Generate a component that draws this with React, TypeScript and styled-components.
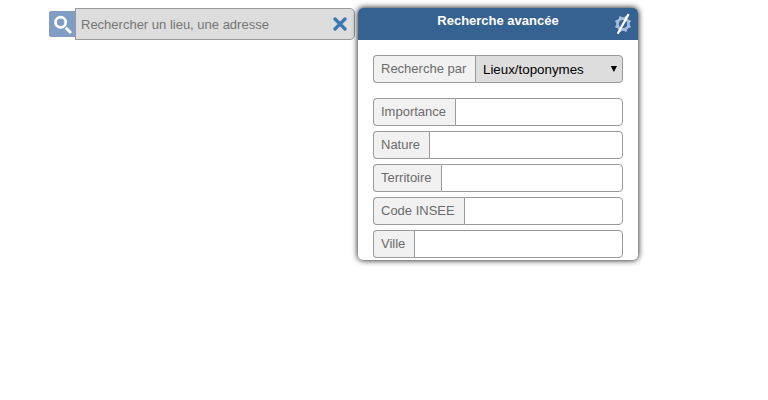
import React from "react";
import styled, { createGlobalStyle } from "styled-components";

const GlobalStyle = createGlobalStyle`
  * { box-sizing: border-box; }
  body {
    margin: 0;
    background: #fff;
    font-family: "Liberation Sans", Arial, sans-serif;
    font-size: 13px;
  }
`;

const Page = styled.main`
  display: flex;
  align-items: flex-start;
  min-height: 100vh;
  padding: 8px 0 0 49px;
`;

const SearchButton = styled.button`
  width: 26px;
  height: 26px;
  margin-top: 3px;
  padding: 0;
  border: 0;
  border-radius: 2px 0 0 2px;
  background: #7f9dc5;
  svg { display: block; }
`;

const SearchField = styled.div`
  display: flex;
  align-items: center;
  width: 280px;
  height: 32px;
  padding: 0 7px 0 5px;
  border: 1px solid #999;
  border-radius: 0 5px 5px 0;
  background: #ddd;
`;

const SearchInput = styled.input`
  flex: 1;
  min-width: 0;
  padding: 0;
  border: 0;
  outline: 0;
  background: transparent;
  font: 13px "Liberation Sans", Arial, sans-serif;
  &::placeholder { color: #757575; opacity: 1; }
`;

const Panel = styled.section`
  width: 280px;
  height: 252px;
  margin-left: 3px;
  overflow: hidden;
  border-radius: 5px;
  background: #fff;
  box-shadow: 0 0 6px #000;
`;

const PanelHeader = styled.header`
  display: grid;
  grid-template-columns: 30px 1fr 30px;
  height: 32px;
  background: #366291;
`;

const PanelTitle = styled.h1`
  grid-column: 2;
  margin: 0;
  padding-top: 5px;
  color: #fff;
  font-size: 13px;
  line-height: 15px;
  text-align: center;
`;

const Form = styled.form`
  padding: 15px 15px 0;
`;

const Row = styled.div<{ $gap?: number }>`
  display: flex;
  height: 28px;
  margin-bottom: ${({ $gap = 5 }) => $gap}px;
`;

const Label = styled.label<{ $width: number }>`
  flex: 0 0 ${({ $width }) => $width}px;
  padding-left: 7px;
  border: 1px solid #999;
  border-right: 0;
  border-radius: 4px 0 0 4px;
  background: #f1f1f1;
  color: #6b6b6b;
  line-height: 26px;
  white-space: nowrap;
`;

const TextInput = styled.input`
  flex: 1;
  min-width: 0;
  border: 1px solid #999;
  border-radius: 0 4px 4px 0;
  background: #fff;
  outline: 0;
`;

const SelectBox = styled.button`
  display: flex;
  flex: 1;
  align-items: center;
  justify-content: space-between;
  padding: 1px 4px 0 7px;
  border: 1px solid #999;
  border-radius: 0 4px 4px 0;
  background: #ddd;
  color: #000;
  font: 13.33px "Liberation Sans", Arial, sans-serif;
`;

const filters = [
  { name: "Importance", width: 82 },
  { name: "Nature", width: 56 },
  { name: "Territoire", width: 68 },
  { name: "Code INSEE", width: 91 },
  { name: "Ville", width: 41 },
];

const teeth = [22.5, 67.5, 112.5, 157.5, 202.5, 247.5, 292.5, 337.5];

const SearchIcon = () => (
  <svg width="26" height="26" viewBox="0 0 26 26" fill="none" stroke="#fff">
    <circle cx="11.6" cy="11.3" r="5.1" strokeWidth="2.7" />
    <path d="M16.7 16.7 L22 22" strokeWidth="2.9" />
  </svg>
);

const ClearIcon = () => (
  <svg width="14" height="14" viewBox="0 0 14 14">
    <path d="M2 2 L12 12 M12 2 L2 12" stroke="#3b78b3" strokeWidth="3.3" strokeLinecap="round" />
  </svg>
);

const GearIcon = () => (
  <svg width="30" height="32" viewBox="0 0 30 32" fill="none">
    <circle cx="15" cy="16" r="5.5" stroke="#a5bdd8" strokeWidth="2.8" />
    {teeth.map((angle) => (
      <path key={angle} d="M13.4 10 L14 7.8 H16 L16.6 10 Z" fill="#a5bdd8" transform={`rotate(${angle} 15 16)`} />
    ))}
    <path d="M9.7 25.8 L20.6 6.1" stroke="#fff" strokeWidth="2.2" />
  </svg>
);

export default function App() {
  return (
    <>
      <GlobalStyle />
      <Page>
        <SearchButton type="button" aria-label="Rechercher"><SearchIcon /></SearchButton>
        <SearchField>
          <SearchInput placeholder="Rechercher un lieu, une adresse" />
          <ClearIcon />
        </SearchField>
        <Panel>
          <PanelHeader>
            <PanelTitle>Recherche avancée</PanelTitle>
            <GearIcon />
          </PanelHeader>
          <Form>
            <Row $gap={15}>
              <Label $width={102}>Recherche par</Label>
              <SelectBox type="button">
                Lieux/toponymes
                <svg width="8" height="8" viewBox="0 0 8 8"><path d="M0.8 0 H7 L3.9 6 Z" fill="#000" /></svg>
              </SelectBox>
            </Row>
            {filters.map(({ name, width }) => (
              <Row key={name}>
                <Label $width={width} htmlFor={name}>{name}</Label>
                <TextInput id={name} />
              </Row>
            ))}
          </Form>
        </Panel>
      </Page>
    </>
  );
}
